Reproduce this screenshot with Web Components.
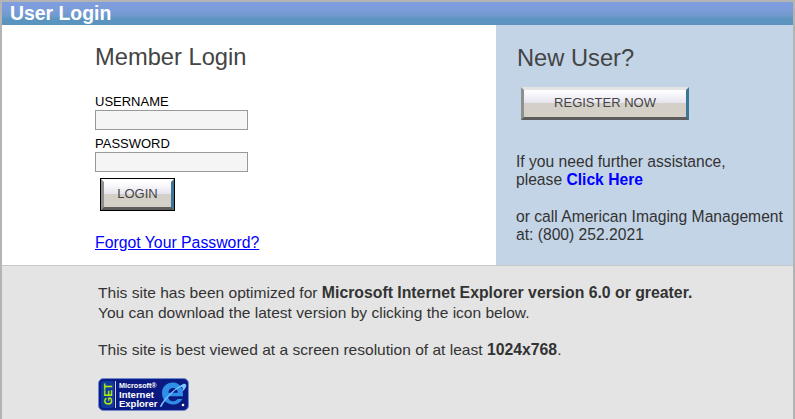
<!DOCTYPE html>
<html lang="en"><head><meta charset="utf-8"><title>User Login</title>
<style>html,body{margin:0;padding:0;background:#fff}body{font-family:"Liberation Sans",Arial,sans-serif}</style>
</head><body>
<login-page></login-page>
<template id="t-btn"><style>
:host{display:inline-block;box-sizing:border-box;font:13px/1 "Liberation Sans",Arial,sans-serif;color:#444}
.o{box-sizing:border-box;height:100%;border-style:solid;border-width:3px;border-color:#e4e4e4 #3c7696 #5c5c5c #8f8f8f;display:flex;align-items:center;justify-content:center;padding-bottom:2px;background:linear-gradient(#fff 0,#f4f3f7 22%,#e4e3ee 50%,#d4d0c8 50%,#d4d0c8 100%)}
:host([dark]) {border:1px solid #000}
:host([dark]) .o{border-top-color:#fff}
</style><div class="o"><slot></slot></div></template>
<template id="t-field"><style>
:host{display:block;font:13px/16px "Liberation Sans",Arial,sans-serif;color:#000}
.b{box-sizing:border-box;display:block;width:153px;height:20px;border:1px solid #999;background:#f5f5f5;margin:0;padding:0}
</style><label><slot></slot><input class="b" type="text"></label></template>
<template id="t-badge"><style>:host{display:block;width:91px;height:35px}svg{display:block}text{font-family:"Liberation Sans",Arial,sans-serif;font-weight:700;fill:#fff}</style>
<svg width="91" height="35" viewBox="0 0 91 35" role="img" aria-label="Get Microsoft Internet Explorer">
<rect x=".5" y="1.500" width="90" height="32" rx="5" fill="#0a1f8c" stroke="#6f86c8"/>
<rect x="2" y="3" width="87" height="29" rx="4" fill="#0b1a80"/>
<rect x="3" y="4" width="13" height="27" rx="3" fill="#123a9c"/>
<rect x="17" y="4" width="1" height="27" fill="#c8d0ee"/>
<text transform="translate(14 28) rotate(-90)" font-size="10.5" style="fill:#b6f000">GET</text>
<text x="21" y="11" font-size="7.2">Microsoft®</text>
<text x="21" y="20.5" font-size="9.5">Internet</text>
<text x="21" y="30" font-size="9.5">Explorer</text>
<path d="M75 5.500c-6.500 0-11 4.500-11 10.500 0 6.500 4.500 11.500 11 11.500 4.500 0 7.500-2 9.500-5.500h-5c-1 1.500-2.500 2.200-4.300 2.200-3 0-5-2-5.200-5h15c.6-7.500-3.500-13.700-10-13.700zm-4.700 10.200c.3-2.800 2.200-4.700 4.800-4.700 2.700 0 4.500 1.900 4.700 4.700z" fill="#2f8fe8"/>
<path d="M62 29c3-6 13-17 23-22 2-1 4 0 3 3-1 2-3 4-4 5 1-3 1-5-1-5-5 1-17 14-19 19-.5 1.500-2 1-2 0z" fill="#79c4ff"/>
<circle cx="85" cy="28" r="1.300" fill="#fff"/>
</svg></template>
<template id="t-page"><style>
:host{display:grid;box-sizing:border-box;width:795px;height:419px;overflow:hidden;border:solid #b4b4b4;border-width:2px 2px 0;grid-template-rows:23px 240px 1fr;grid-template-columns:494px 1fr;font-family:"Liberation Sans",Arial,sans-serif}
header{grid-column:1/3;background:linear-gradient(#7d9ddc 0,#7d9ddc 20%,#7a9cd8 40%,#6f9acb 60%,#5b95bf 75%,#5b95bf 100%);color:#fff;font:700 19.4px/21px "Liberation Sans",Arial,sans-serif;padding:1px 0 0 8px;box-sizing:border-box}
.left{background:#fff;padding:19px 0 0 93px;box-sizing:border-box}
.right{background:#c3d4e6;padding:20px 0 0 20px;box-sizing:border-box;color:#333;font-size:15.65px;line-height:18px}
h1{margin:0;font:400 23.7px/26px "Liberation Sans",Arial,sans-serif;color:#444}
.left h1{margin-bottom:24px}
.right h1{margin-left:1px}
.fields{display:grid;gap:6px;width:153px}
.loginbtn{display:block;width:75px;height:33px;margin:6px 0 23px 5px}
.reg{display:block;width:168px;height:33px;margin:16px 0 33px 5px}
a.forgot{font-size:15.8px;line-height:18px;color:#00f}
.right p{margin:0 0 19px}
.right a{color:#00f;font-weight:700;text-decoration:none}
footer{grid-column:1/3;background:#e4e4e4;border-top:1px solid #c8c8c8;padding:17px 0 0 96px;box-sizing:border-box;color:#333;font-size:15.55px;line-height:20px}
footer p{margin:0 0 17px}
footer b{font-size:15.8px}
</style>
<header>User Login</header>
<section class="left"><h1>Member Login</h1>
<div class="fields"><login-field>USERNAME</login-field><login-field>PASSWORD</login-field></div>
<login-button class="loginbtn" dark>LOGIN</login-button>
<a class="forgot" href="#">Forgot Your Password?</a></section>
<section class="right"><h1>New User?</h1>
<login-button class="reg">REGISTER NOW</login-button>
<p>If you need further assistance,<br>please <a href="#">Click Here</a></p>
<p>or call American Imaging Management<br>at: (800) 252.2021</p></section>
<footer><p>This site has been optimized for <b>Microsoft Internet Explorer version 6.0 or greater.</b><br>You can download the latest version by clicking the icon below.</p>
<p>This site is best viewed at a screen resolution of at least <b>1024x768</b>.</p>
<login-badge></login-badge></footer>
</template>
<script>
function def(name,id){customElements.define(name,class extends HTMLElement{constructor(){super();this.attachShadow({mode:"open"}).appendChild(document.getElementById(id).content.cloneNode(true))}})}
def("login-button","t-btn");def("login-field","t-field");def("login-badge","t-badge");def("login-page","t-page");
</script>
</body></html>
